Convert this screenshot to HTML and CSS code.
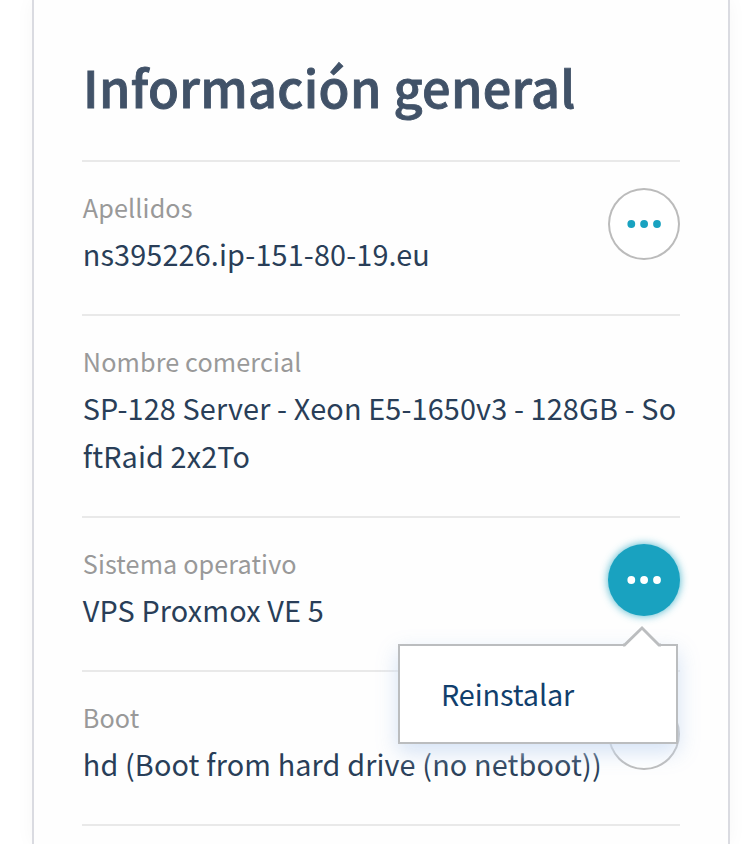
FILE: index.html
```html
<!DOCTYPE html>
<html lang="es">
<head>
<meta charset="utf-8">
<title>Información general</title>
<link rel="stylesheet" href="styles.css">
</head>
<body>
<main class="card">
  <h1 class="card-title">Información general</h1>
  <dl class="list">
    <div class="row">
      <div class="info"><dt>Apellidos</dt><dd>ns395226.ip-151-80-19.eu</dd></div>
      <button class="more"><svg viewBox="0 0 72 72"><circle cx="23.3" cy="36" r="3.9"/><circle cx="36.1" cy="36" r="3.9"/><circle cx="49" cy="36" r="3.9"/></svg></button>
    </div>
    <div class="row">
      <div class="info"><dt>Nombre comercial</dt><dd>SP-128 Server - Xeon E5-1650v3 - 128GB - SoftRaid 2x2To</dd></div>
    </div>
    <div class="row">
      <div class="info"><dt>Sistema operativo</dt><dd>VPS Proxmox VE 5</dd></div>
      <div class="action">
        <button class="more active"><svg viewBox="0 0 72 72"><circle cx="23.3" cy="36" r="3.9"/><circle cx="36.1" cy="36" r="3.9"/><circle cx="49" cy="36" r="3.9"/></svg></button>
        <div class="menu">
          <svg class="arrow" viewBox="0 0 38 21"><path class="arrow-fill" d="M1 21V19.5L19 2.5L37 19.5V21Z"/><path class="arrow-line" d="M0 19H1.5L19 2L36 19H38"/></svg>
          <a class="menu-item">Reinstalar</a>
        </div>
      </div>
    </div>
    <div class="row">
      <div class="info"><dt>Boot</dt><dd>hd (Boot from hard drive (no netboot))</dd></div>
      <button class="more"><svg viewBox="0 0 72 72"><circle cx="23.3" cy="36" r="3.9"/><circle cx="36.1" cy="36" r="3.9"/><circle cx="49" cy="36" r="3.9"/></svg></button>
    </div>
    <div class="row"></div>
  </dl>
</main>
</body>
</html>
```
FILE: styles.css
```css
* { box-sizing: border-box; }
body {
  margin: 0;
  height: 844px;
  overflow: hidden;
  background: #fff;
  font-family: "Noto Sans CJK JP", "Noto Sans", sans-serif;
}
.card {
  width: 698px;
  height: 844px;
  margin-left: 32px;
  padding: 0 48px;
  border: solid #dadbe1;
  border-width: 0 2px;
  background: #fefefe;
  box-shadow: 0 0 18px rgba(0, 0, 0, .04);
}
.card-title {
  margin: 0;
  height: 160px;
  padding: 51px 0 0 1px;
  color: #415268;
  font-size: 50.4px;
  font-weight: 500;
  line-height: 72px;
  letter-spacing: .34px;
  -webkit-text-stroke: .9px #415268;
  white-space: nowrap;
}
.list { margin: 0; }
.row {
  display: flex;
  border-top: 2px solid #e9e9e9;
}
.info {
  flex: 1;
  min-width: 0;
  padding: 27px 0 36px .8px;
}
dt {
  margin-bottom: 5px;
  color: #999;
  font-size: 25.2px;
  line-height: 36px;
  letter-spacing: .12px;
}
dd {
  margin: 0;
  color: #293e58;
  font-size: 28.8px;
  line-height: 48px;
  letter-spacing: .14px;
  word-break: break-all;
}
.more {
  display: block;
  flex: none;
  width: 72px;
  height: 72px;
  margin: 26px 0 0;
  padding: 0;
  border: 0;
  border-radius: 50%;
  background: #fff;
  box-shadow: inset 0 0 0 2px #bbb;
}
.more svg { display: block; fill: #19a2c0; }
.more.active {
  background: #19a2c0;
  box-shadow: 0 0 8px rgba(25, 162, 192, .8);
}
.more.active svg { fill: #fff; }
.action { position: relative; }
.menu {
  position: absolute;
  z-index: 1;
  top: 126px;
  right: 2px;
  width: 280px;
  height: 100px;
  padding: 24px 41px;
  border: 2px solid #bbbdbf;
  background: #fff;
  box-shadow: 0 8px 20px rgba(205, 221, 243, .85);
}
.menu-item {
  color: #113f6d;
  font-size: 28.8px;
  line-height: 48px;
  letter-spacing: -.1px;
}
.arrow {
  position: absolute;
  top: -20px;
  right: 15px;
  width: 38px;
  height: 21px;
}
.arrow-fill { fill: #fff; }
.arrow-line { fill: none; stroke: #bbbdbf; stroke-width: 2.8; }
```
